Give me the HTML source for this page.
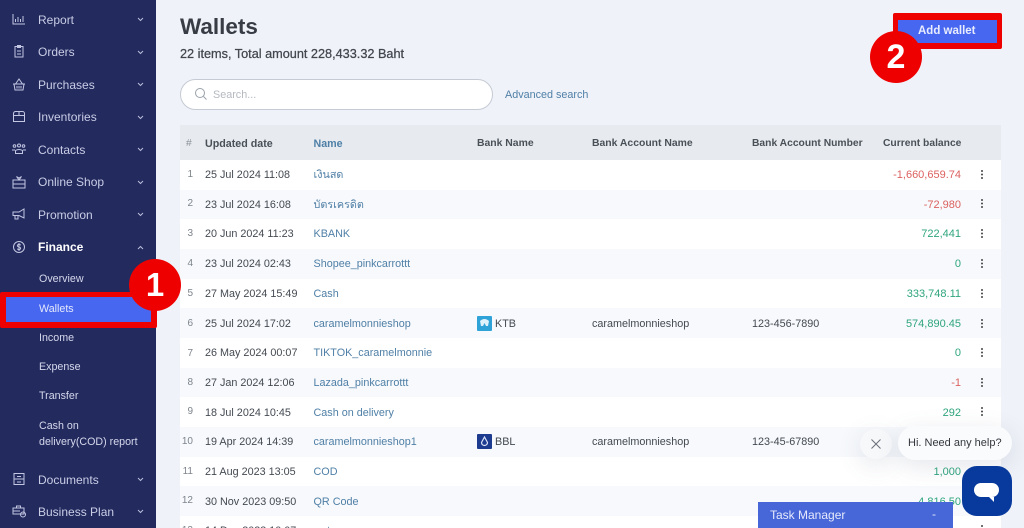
<!DOCTYPE html>
<html><head><meta charset="utf-8"><style>
html,body{margin:0;padding:0;width:1024px;height:528px;overflow:hidden}
body{background:#eff2f8;font-family:"Liberation Sans",sans-serif;color:#3a3f47}
div,span,svg{position:absolute}
#p{left:0;top:0;width:1024px;height:528px;overflow:hidden;background:#eff2f8}
.t{white-space:nowrap;line-height:14px}
#side{left:0;top:0;width:156px;height:528px;background:#232a5e}
.m{left:38px;font-size:12px;color:#c9cde6;white-space:nowrap;line-height:16px}
.s{left:39px;font-size:10.7px;color:#d5d8ec;white-space:nowrap;line-height:14px}
.ic{left:12px;width:14px;height:14px;fill:none;stroke:#c3c7e2;stroke-width:1}
.ch{left:137px;width:7px;height:5px;fill:none;stroke:#b9bedb;stroke-width:1}
.r{left:180px;width:821px;height:30px;background:#fff}
.a{background:#f7f9fc}
.n{left:180px;width:13px;text-align:right;font-size:10px;color:#7d848c;line-height:14px;white-space:nowrap;margin-top:2px}
.d{left:205px;font-size:10.8px;color:#444a52;line-height:14px;white-space:nowrap;margin-top:1px}
.l{left:313.5px;font-size:10.8px;color:#4f7fa6;line-height:14px;white-space:nowrap;margin-top:1px}
.b{left:495px;font-size:10.8px;color:#444a52;line-height:14px;margin-top:1px}
.an{left:592px;font-size:10.8px;color:#444a52;line-height:14px;margin-top:1px}
.no{left:752px;font-size:10.8px;color:#444a52;line-height:14px;white-space:nowrap;margin-top:1px}
.v{right:63px;font-size:11px;line-height:14px;white-space:nowrap;margin-top:1px}
.g{color:#2fa57d}.e{color:#dc6160}
.k{left:981px;width:2px;height:2px;background:#444;border-radius:50%;box-shadow:0 3.5px 0 #444,0 7px 0 #444;margin-top:-1px}
.h{top:136.5px;font-size:10.3px;font-weight:bold;color:#4a5058;line-height:14px;white-space:nowrap}
.bad{width:52px;height:52px;border-radius:50%;background:#ee0000;color:#fff;font-weight:bold;text-align:center;line-height:52px}
</style></head><body><div id="p">

<div id="side"></div>
<svg class="ic" style="top:12px" viewBox="0 0 14 14"><path d="M1 2v10h12M3.5 10V7M6 10V5M8.5 10V7M11 10V4"/></svg>
<div class="m" style="top:12px">Report</div>
<svg class="ch" style="top:17px" viewBox="0 0 7 5"><path d="M1 1l2.5 2.5L6 1"/></svg>
<svg class="ic" style="top:44px" viewBox="0 0 14 14"><path d="M3 2.500h8v10.500H3zM5.500 1.500h3v2h-3zM5 7h4M5 10h4"/></svg>
<div class="m" style="top:44px">Orders</div>
<svg class="ch" style="top:50px" viewBox="0 0 7 5"><path d="M1 1l2.5 2.5L6 1"/></svg>
<svg class="ic" style="top:77px" viewBox="0 0 14 14"><path d="M1 7h12M2 7l1 6h8l1-6M3.500 7L7 2l3.500 5M5 9v2.500M7 9v2.500M9 9v2.500"/></svg>
<div class="m" style="top:77px">Purchases</div>
<svg class="ch" style="top:82px" viewBox="0 0 7 5"><path d="M1 1l2.5 2.5L6 1"/></svg>
<svg class="ic" style="top:109px" viewBox="0 0 14 14"><path d="M1.500 4.500a2 2 0 0 1 2-2h7a2 2 0 0 1 2 2v8h-11zM1.500 6.500h11M7 2.500v4"/></svg>
<div class="m" style="top:109px">Inventories</div>
<svg class="ch" style="top:115px" viewBox="0 0 7 5"><path d="M1 1l2.5 2.5L6 1"/></svg>
<svg class="ic" style="top:142px" viewBox="0 0 14 14"><circle cx="2.500" cy="4" r="1.300"/><circle cx="7" cy="3.500" r="1.500"/><circle cx="11.500" cy="4" r="1.300"/><path d="M0 8h3M11 8h3M3.500 11.500V8.500q3.500-2 7 0v3z"/></svg>
<div class="m" style="top:142px">Contacts</div>
<svg class="ch" style="top:147px" viewBox="0 0 7 5"><path d="M1 1l2.5 2.5L6 1"/></svg>
<svg class="ic" style="top:175px" viewBox="0 0 14 14"><path d="M1 5h12v8H1zM1 9h12M7 5L4.500 1.500 7 3l2.500-1.500z"/></svg>
<div class="m" style="top:174px">Online Shop</div>
<svg class="ch" style="top:180px" viewBox="0 0 7 5"><path d="M1 1l2.5 2.5L6 1"/></svg>
<svg class="ic" style="top:207px" viewBox="0 0 14 14"><path d="M1 5h6l5-3v9L7 8.500H1zM3 8.500V12h3V8.500"/></svg>
<div class="m" style="top:207px">Promotion</div>
<svg class="ch" style="top:212px" viewBox="0 0 7 5"><path d="M1 1l2.5 2.5L6 1"/></svg>
<svg class="ic" style="top:240px" viewBox="0 0 14 14"><circle cx="7" cy="7" r="5.500"/><path d="M8.800 5.200Q7 3.800 5.600 5q-.8 1.500 1.400 2t1.400 2q-1.400 1.200-3.200-.2M7 3v8"/></svg>
<div class="m" style="top:239px;color:#fff;font-weight:bold">Finance</div>
<svg class="ch" style="top:245px" viewBox="0 0 7 5"><path d="M1 4l2.500-2.500L6 4"/></svg>

<div class="s" style="top:272px">Overview</div>
<div style="left:0;top:292px;width:157px;height:36px;background:#4767f0;border-style:solid;border-color:#ee0000;border-width:5px 6px 6px 6px;box-sizing:border-box;border-radius:2px"></div>
<div class="s" style="top:302px;color:#e4e8fb">Wallets</div>
<div class="s" style="top:331px">Income</div>
<div class="s" style="top:360px">Expense</div>
<div class="s" style="top:389px">Transfer</div>
<div class="s" style="top:419px">Cash on</div>
<div class="s" style="top:435px">delivery(COD) report</div>

<svg class="ic" style="top:472px" viewBox="0 0 14 14"><path d="M2 1.500h10v11H2zM2 7h10M5 4.500h4M5 10h4"/></svg>
<div class="m" style="top:472px">Documents</div>
<svg class="ch" style="top:477px" viewBox="0 0 7 5"><path d="M1 1l2.5 2.5L6 1"/></svg>
<svg class="ic" style="top:504px" viewBox="0 0 14 14"><path d="M1 4h11v6H1zM4.500 4V2h4v2M1 7h7"/><circle cx="11" cy="10.500" r="2.500"/></svg>
<div class="m" style="top:504px">Business Plan</div>
<svg class="ch" style="top:509px" viewBox="0 0 7 5"><path d="M1 1l2.5 2.5L6 1"/></svg>

<div class="t" style="left:180px;top:14px;font-size:22.500px;line-height:26px;font-weight:bold;color:#383c44">Wallets</div>
<div class="t" style="left:180px;top:47px;font-size:12.700px;color:#42464e;-webkit-text-stroke:.25px #42464e">22 items, Total amount 228,433.32 Baht</div>

<div style="left:180px;top:79px;width:313px;height:31px;box-sizing:border-box;background:#fff;border:1px solid #c5cad3;border-radius:16px"></div>
<svg style="left:194px;top:87px;width:14px;height:14px;fill:none;stroke:#9aa1aa;stroke-width:1" viewBox="0 0 14 14"><circle cx="6" cy="6" r="4.500"/><path d="M9.500 9.500l3 3"/></svg>
<div class="t" style="left:213px;top:88px;font-size:10.800px;color:#b4b9c0">Search...</div>
<div class="t" style="left:505px;top:88px;font-size:10.800px;color:#4f7fa6">Advanced search</div>

<div style="left:893px;top:13px;width:109px;height:36px;box-sizing:border-box;background:#4767f0;border-style:solid;border-color:#ee0000;border-width:7px 5px 6px 5px;border-radius:2px"></div>
<div class="t" style="left:918px;top:24px;font-size:11.500px;font-weight:bold;color:#e8ecfd">Add wallet</div>

<div style="left:180px;top:125px;width:821px;height:35px;background:#e7ebef"></div>
<div class="h" style="left:186px;color:#8b9199;font-weight:normal">#</div>
<div class="h" style="left:205px;font-size:10.700px">Updated date</div>
<div class="h" style="left:313.500px;color:#4f7fa6;font-size:10.700px">Name</div>
<div class="h" style="left:477px;font-size:10.400px">Bank Name</div>
<div class="h" style="left:592px;font-size:10.400px">Bank Account Name</div>
<div class="h" style="left:752px">Bank Account Number</div>
<div class="h" style="left:883px">Current balance</div>

<div class="r" style="top:160px"></div>
<div class="r a" style="top:190px"></div>
<div class="r" style="top:219px"></div>
<div class="r a" style="top:249px"></div>
<div class="r" style="top:279px"></div>
<div class="r a" style="top:308px"></div>
<div class="r" style="top:338px"></div>
<div class="r a" style="top:368px"></div>
<div class="r" style="top:397px"></div>
<div class="r a" style="top:427px"></div>
<div class="r" style="top:457px"></div>
<div class="r a" style="top:486px"></div>
<div class="r" style="top:516px"></div>

<div class="n" style="top:166px">1</div><div class="d" style="top:167px">25 Jul 2024 11:08</div><div class="l" style="top:167px">เงินสด</div><div class="v e" style="top:167px">-1,660,659.74</div><div class="k" style="top:171px"></div>
<div class="n" style="top:195px">2</div><div class="d" style="top:196.500px">23 Jul 2024 16:08</div><div class="l" style="top:196.500px">บัตรเครดิต</div><div class="v e" style="top:196.500px">-72,980</div><div class="k" style="top:200px"></div>
<div class="n" style="top:225px">3</div><div class="d" style="top:226px">20 Jun 2024 11:23</div><div class="l" style="top:226px">KBANK</div><div class="v g" style="top:226px">722,441</div><div class="k" style="top:230px"></div>
<div class="n" style="top:255px">4</div><div class="d" style="top:256px">23 Jul 2024 02:43</div><div class="l" style="top:256px">Shopee_pinkcarrottt</div><div class="v g" style="top:256px">0</div><div class="k" style="top:260px"></div>
<div class="n" style="top:285px">5</div><div class="d" style="top:286px">27 May 2024 15:49</div><div class="l" style="top:286px">Cash</div><div class="v g" style="top:286px">333,748.11</div><div class="k" style="top:290px"></div>
<div class="n" style="top:315px">6</div><div class="d" style="top:316px">25 Jul 2024 17:02</div><div class="l" style="top:316px">caramelmonnieshop</div><div class="b" style="top:316px">KTB</div><div class="an" style="top:316px">caramelmonnieshop</div><div class="no" style="top:316px">123-456-7890</div><div class="v g" style="top:316px">574,890.45</div><div class="k" style="top:320px"></div>
<div class="n" style="top:345px">7</div><div class="d" style="top:345px">26 May 2024 00:07</div><div class="l" style="top:345px">TIKTOK_caramelmonnie</div><div class="v g" style="top:345px">0</div><div class="k" style="top:349px"></div>
<div class="n" style="top:374px">8</div><div class="d" style="top:375px">27 Jan 2024 12:06</div><div class="l" style="top:375px">Lazada_pinkcarrottt</div><div class="v e" style="top:375px">-1</div><div class="k" style="top:379px"></div>
<div class="n" style="top:403px">9</div><div class="d" style="top:404.500px">18 Jul 2024 10:45</div><div class="l" style="top:404.500px">Cash on delivery</div><div class="v g" style="top:404.500px">292</div><div class="k" style="top:408px"></div>
<div class="n" style="top:433px">10</div><div class="d" style="top:434px">19 Apr 2024 14:39</div><div class="l" style="top:434px">caramelmonnieshop1</div><div class="b" style="top:434px">BBL</div><div class="an" style="top:434px">caramelmonnieshop</div><div class="no" style="top:434px">123-45-67890</div>
<div class="n" style="top:463px">11</div><div class="d" style="top:464px">21 Aug 2023 13:05</div><div class="l" style="top:464px">COD</div><div class="v g" style="top:464px">1,000</div>
<div class="n" style="top:492px">12</div><div class="d" style="top:493.500px">30 Nov 2023 09:50</div><div class="l" style="top:493.500px">QR Code</div><div class="v g" style="top:493.500px">4,816.50</div>
<div class="n" style="top:522px">13</div><div class="d" style="top:523px">14 Dec 2023 10:07</div><div class="l" style="top:523px">watsons</div><div class="k" style="top:526px"></div>

<div style="left:477px;top:316px;width:15px;height:15px;background:#2fa3d8;border-radius:1px"></div>
<svg style="left:479px;top:318px;width:11px;height:11px" viewBox="0 0 11 11"><path d="M1 3Q5.500-1 10 3L9 8H7L5.500 5 4 8H2z" fill="#dff2fb"/></svg>
<div style="left:477px;top:434px;width:15px;height:15px;background:#1e3c8f;border-radius:1px"></div>
<svg style="left:479px;top:436px;width:11px;height:11px" viewBox="0 0 11 11"><path d="M5.500 1L8.500 6.500A3 3 0 1 1 2.500 6.500z" fill="none" stroke="#dbe4fa" stroke-width="1.200"/></svg>

<div style="left:758px;top:502px;width:195px;height:26px;background:#4767d8"></div>
<div class="t" style="left:770px;top:508px;font-size:12px;color:#e6eafb">Task Manager</div>
<div class="t" style="left:932px;top:507px;font-size:12px;color:#dfe5fb">-</div>

<div style="left:860px;top:429px;width:32px;height:30px;border-radius:50%;background:#f7f8fa;box-shadow:0 6px 24px rgba(90,100,130,.16)"></div>
<svg style="left:870px;top:438px;width:12px;height:12px;fill:none;stroke:#6a6f78;stroke-width:1" viewBox="0 0 12 12"><path d="M1.500 1.500l9 9M10.500 1.500l-9 9"/></svg>
<div style="left:898px;top:426px;width:114px;height:34px;border-radius:17px;background:#fafbfc;box-shadow:0 6px 24px rgba(90,100,130,.16)"></div>
<div class="t" style="left:908px;top:436px;font-size:11px;color:#33373d">Hi. Need any help?</div>
<div style="left:962px;top:466px;width:50px;height:50px;border-radius:15px;background:#073a9c"></div>
<div style="left:974px;top:483px;width:25px;height:14px;border-radius:7px;background:#fff"></div>
<svg style="left:989px;top:497px;width:5px;height:5px" viewBox="0 0 6 6"><path d="M0 0h6v6z" fill="#fff"/></svg>

<div class="bad" style="left:870px;top:31px;font-size:34px">2</div>
<div class="bad" style="left:129px;top:259px;font-size:33px">1</div>
</div></body></html>
